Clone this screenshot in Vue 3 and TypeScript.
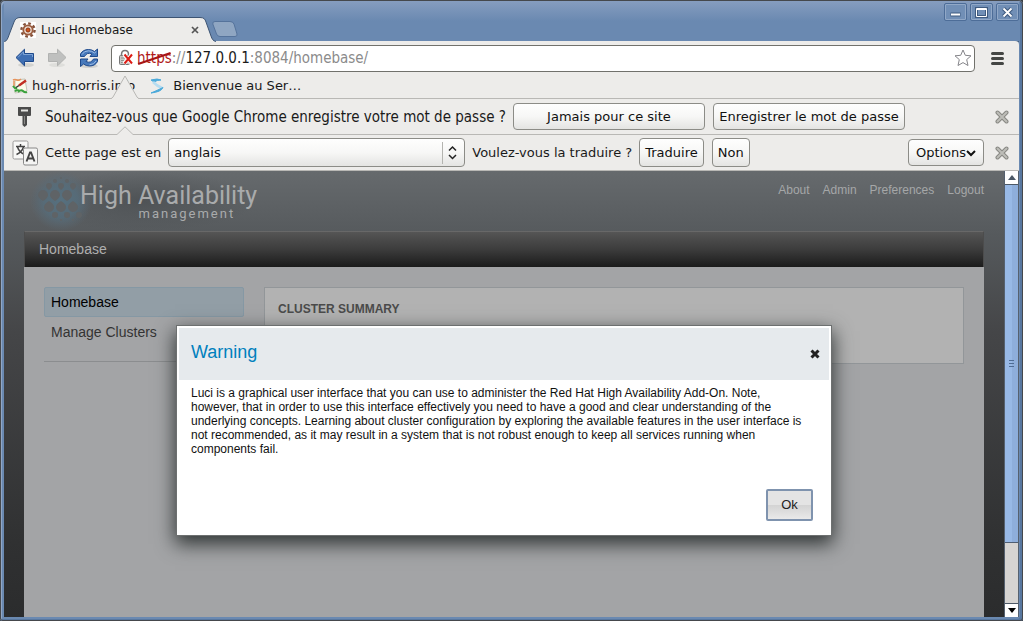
<script setup lang="ts">
import { computed, ref } from 'vue'

interface Bookmark { id: string; label: string }

const bookmarks: Bookmark[] = [
  { id: 'hugh', label: 'hugh-norris.info' },
  { id: 'sfr', label: 'Bienvenue au Ser…' },
]
const topLinks = ['About', 'Admin', 'Preferences', 'Logout']
const sections = ['Homebase', 'Manage Clusters']

const url = 'https://127.0.0.1:8084/homebase/'
const editing = ref(false)
const fieldValue = computed(() => (editing.value ? url : ''))
const language = ref('anglais')
const passwordBar = ref(true)
const translateBar = ref(true)
const warningOpen = ref(true)
</script>

<template>
  <div class="window">
    <header class="titlebar">
      <div class="tab">
        <svg class="tab-shape" viewBox="0 0 212 25" aria-hidden="true">
          <path d="M0 25 C3 24 4 21 5 18 L10 5 C11 2 13 .5 16 .5 H196 C200 .5 201 2 202 5 L207 19 C208 22 209 24 212 25Z" fill="#edecea" />
          <path d="M0 25 C3 24 4 21 5 18 L10 5 C11 2 13 .5 16 .5 H196 C200 .5 201 2 202 5 L207 19 C208 22 209 24 212 24.5" fill="none" stroke="#3d5473" />
        </svg>
        <svg class="favicon" viewBox="0 0 16 16" aria-hidden="true">
          <rect width="16" height="16" fill="#fff" />
          <circle cx="8" cy="8" r="6.6" fill="none" stroke="#84513a" stroke-width="2.4" stroke-dasharray="2.7 2.48" />
          <circle cx="8" cy="8" r="4.700" fill="#e9d8cd" stroke="#9a5c3e" stroke-width="1.800" />
          <circle cx="8" cy="8" r="2" fill="#d2521b" stroke="#8c3510" />
        </svg>
        <span class="tab-title">Luci Homebase</span>
        <button class="plain tab-close" aria-label="Fermer l'onglet">
          <svg width="8" height="8" viewBox="0 0 8 8"><path d="M1 1l6 6M7 1L1 7" stroke="#555" stroke-width="1.7" /></svg>
        </button>
      </div>
      <button class="plain new-tab" aria-label="Nouvel onglet">
        <svg width="26" height="16" viewBox="0 0 26 16"><path d="M3 .5H18Q21 .5 22 3L25 13Q25.500 15.500 23 15.500H8Q5.500 15.500 4.500 13L.8 3Q.3 .5 3 .5Z" fill="#8fa6c2" stroke="#55739b" /></svg>
      </button>
      <div class="controls">
        <button class="control" aria-label="Réduire">
          <svg width="21" height="15" viewBox="0 0 21 15"><path d="M5.500 9.500h10" stroke="#3f5b80" stroke-width="4" /><path d="M6 9.500h9" stroke="#fff" stroke-width="2" /></svg>
        </button>
        <button class="control" aria-label="Agrandir">
          <svg width="21" height="15" viewBox="0 0 21 15"><rect x="5.500" y="3.500" width="10" height="8" fill="none" stroke="#3f5b80" stroke-width="3" /><path d="M5.500 3.500h10v8h-10zM5.500 4.500h10" fill="none" stroke="#fff" /></svg>
        </button>
        <button class="control" aria-label="Fermer">
          <svg width="21" height="15" viewBox="0 0 21 15"><path d="M6.500 3.500l8 8M14.500 3.500l-8 8" stroke="#3f5b80" stroke-width="4" /><path d="M6.500 3.500l8 8M14.500 3.500l-8 8" stroke="#fff" stroke-width="1.800" /></svg>
        </button>
      </div>
    </header>

    <div class="browser">
      <nav class="toolbar" aria-label="Navigation">
        <button class="plain tool" aria-label="Précédent">
          <svg width="20" height="20" viewBox="0 0 20 20"><ellipse cx="11" cy="17" rx="8" ry="2" fill="#d3d3d0" /><path d="M1 9.500L9.500 1.200V5.500H18.500V13.500H9.500V17.800Z" fill="#3f6fb3" stroke="#1f4a8c" /><path d="M3 9.300L8.500 3.800V6.500H17.500V9" fill="none" stroke="#7ea4d6" /></svg>
        </button>
        <button class="plain tool" aria-label="Suivant">
          <svg width="20" height="20" viewBox="0 0 20 20"><ellipse cx="10" cy="17" rx="8" ry="2" fill="#dededb" /><path d="M19 9.500L10.500 1.200V5.500H1.500V13.500H10.500V17.800Z" fill="#bfc0bf" stroke="#b1b2b1" /></svg>
        </button>
        <button class="plain tool" aria-label="Actualiser">
          <svg width="20" height="20" viewBox="0 0 20 20">
            <ellipse cx="10" cy="18" rx="9" ry="2" fill="#d3d3d0" />
            <path d="M1.500 8.500V6Q4 1.500 9.500 1.500Q13 1.500 15.500 3.500L18.500 1V8.500H11L13 6Q8 3.800 5.500 8.500Z" fill="#4779bb" stroke="#1f4a8c" />
            <path d="M18.500 11V13.500Q16 18 10.500 18Q7 18 4.500 16L1.500 18.500V11H9L7 13.500Q12 15.700 14.500 11Z" fill="#4779bb" stroke="#1f4a8c" />
            <path d="M3 6.500Q5 2.800 9.500 2.800Q13 2.800 15.500 5L17.300 3.500M17 13Q15 16.700 10.500 16.700" fill="none" stroke="#9dbbe4" />
          </svg>
        </button>
        <div class="omnibox">
          <svg class="lock" width="16" height="18" viewBox="0 0 16 18" aria-hidden="true">
            <path d="M3.500 8V5.500Q3.500 1.500 7 1.500T10.500 5.500V8" fill="none" stroke="#777" stroke-width="1.500" />
            <rect x="1.500" y="6.500" width="10" height="9" rx="1" fill="#c9c9c6" stroke="#777" />
            <path d="M3 9h6M3 11.500h5M3 13.500h5" stroke="#929290" />
            <path d="M6 5.500l8 9M14 5.500l-8 9" stroke="#fff" stroke-width="4" />
            <path d="M6.500 5.500l7.500 9M14 5.500l-7.500 9" stroke="#dc1d16" stroke-width="2" />
          </svg>
          <div class="address">
            <input class="address-input" type="text" aria-label="Adresse" :value="fieldValue" @focus="editing = true" @blur="editing = false" />
            <div v-if="!editing" class="address-text">
              <span class="scheme">https<svg class="strike" viewBox="0 0 32 13" preserveAspectRatio="none" aria-hidden="true"><path d="M1 12L31 1" stroke="#a81414" stroke-width="2" /></svg></span><span>://</span><span class="host">127.0.0.1</span><span>:8084/homebase/</span>
            </div>
          </div>
          <button class="plain star" aria-label="Ajouter aux favoris">
            <svg width="18" height="18" viewBox="0 0 18 18"><path d="M9 1L11.300 6.300L17 6.800L12.700 10.600L14 16.500L9 13.600L4 16.500L5.300 10.600L1 6.800L6.700 6.300Z" fill="#fff" stroke="#85858a" stroke-linejoin="round" /></svg>
          </button>
        </div>
        <button class="plain menu" aria-label="Menu">
          <svg width="13" height="13" viewBox="0 0 13 13"><path d="M1.500 1.500h10M1.500 6.500h10M1.500 11.500h10" stroke="#444644" stroke-width="3" stroke-linecap="round" /></svg>
        </button>
      </nav>

      <nav class="bookmarks" aria-label="Favoris">
        <a v-for="mark in bookmarks" :key="mark.id" href="#" class="bookmark">
          <svg v-if="mark.id === 'hugh'" width="16" height="16" viewBox="0 0 16 16" aria-hidden="true">
            <path d="M3 2L13 1L15 13L3 15Z" fill="#fbfbe9" stroke="#c4c4b8" />
            <path d="M1 2q2-1 4 0t4-1M2 3v5" stroke="#e8935a" stroke-width="1.500" fill="none" />
            <path d="M7 7.500L14 2.500" stroke="#c22f22" stroke-width="2.500" />
            <path d="M1 8q2 3 4 2M6 14q3-3 5-1t4 1M3 13.500q1-2 4-1" stroke="#3aa13c" stroke-width="2" fill="none" />
            <path d="M4 9.500L7 7.500" stroke="#333" stroke-width="1.500" />
          </svg>
          <svg v-else width="16" height="16" viewBox="0 0 16 16" aria-hidden="true">
            <path d="M2 2Q9 0 12 2Q8 2 5 4Z" fill="#4aa9da" stroke="#4aa9da" />
            <path d="M4 4Q8 8 13 10" stroke="#b5dcf1" stroke-width="2.500" fill="none" />
            <path d="M14 9.500Q12 14 2 15Q8 12.500 14 9.500Z" fill="#4aa9da" stroke="#4aa9da" />
          </svg>
          <span>{{ mark.label }}</span>
        </a>
      </nav>

      <section v-if="passwordBar" class="infobar" aria-label="Mot de passe">
        <svg class="pointer pointer-tall" viewBox="0 0 28 24" aria-hidden="true"><path d="M0 24L1 23L14 .7L27 23L28 24Z" fill="#edecea" /><path d="M0 23.500Q1 23.500 2 22L14 1L26 22Q27 23.500 28 23.500" fill="none" stroke="#b9b8b5" /></svg>
        <svg class="info-icon" width="26" height="22" viewBox="0 0 26 22" aria-hidden="true">
          <path d="M6 1H19V9Q19 10 18 10H15V19L12.500 21L10.500 19V10H7Q6 10 6 9Z" fill="#4b4b4b" />
          <path d="M9 4.500H16" stroke="#e6e6e3" stroke-width="2" />
          <path d="M12.500 10V18" stroke="#8a8a88" />
        </svg>
        <span class="info-text message">Souhaitez-vous que Google Chrome enregistre votre mot de passe ?</span>
        <button class="push wide">Jamais pour ce site</button>
        <button class="push wide">Enregistrer le mot de passe</button>
        <button class="plain dismiss" aria-label="Fermer la barre" @click="passwordBar = false">
          <svg width="14" height="14" viewBox="0 0 14 14"><path d="M2.500 2.500l9 9M11.500 2.500l-9 9" stroke="#888883" stroke-width="4" stroke-linecap="round" /><path d="M2.500 2.500l9 9M11.500 2.500l-9 9" stroke="#bdbdb8" stroke-width="2" stroke-linecap="round" /></svg>
        </button>
      </section>

      <section v-if="translateBar" class="infobar" aria-label="Traduction">
        <svg class="pointer pointer-short" viewBox="0 0 18 9" aria-hidden="true"><path d="M0 9L1 8L9 .7L17 8L18 9Z" fill="#edecea" /><path d="M0 8.500H1L9 .8L17 8.500H18" fill="none" stroke="#b9b8b5" /></svg>
        <svg class="info-icon" width="26" height="26" viewBox="0 0 26 26" aria-hidden="true">
          <rect x="1" y="1" width="15" height="18" rx="1.500" fill="#f8f8f7" stroke="#999" />
          <path d="M8.500 4V6M4 6.500H13M5.500 7Q7 12 12.500 14.500M11.500 7Q10 12 4.500 14.500" fill="none" stroke="#444" stroke-width="1.500" />
          <rect x="11.500" y="8" width="14" height="17" rx="1.500" fill="#f4f4f3" stroke="#888" />
          <path d="M14.500 21.500L18 12.500H19L22.500 21.500M16 18.500H21" fill="none" stroke="#444" stroke-width="1.900" />
        </svg>
        <label class="info-text" for="language">Cette page est en</label>
        <div class="picker">
          <select id="language" v-model="language"><option>anglais</option><option>français</option></select>
          <svg class="picker-arrows" width="24" height="22" viewBox="0 0 24 22" aria-hidden="true"><path d="M1.500 0V22" stroke="#b4b4b0" /><path d="M8 8.500L11.500 5L15 8.500M8 13L11.500 16.500L15 13" fill="none" stroke="#222" stroke-width="1.500" /></svg>
        </div>
        <span class="info-text">Voulez-vous la traduire ?</span>
        <button class="push tall">Traduire</button>
        <button class="push tall">Non</button>
        <button class="push options">Options<svg width="10" height="8" viewBox="0 0 10 8" aria-hidden="true"><path d="M1 2l4 4 4-4" fill="none" stroke="#111" stroke-width="2" /></svg></button>
        <button class="plain dismiss" aria-label="Fermer la barre" @click="translateBar = false">
          <svg width="14" height="14" viewBox="0 0 14 14"><path d="M2.500 2.500l9 9M11.500 2.500l-9 9" stroke="#888883" stroke-width="4" stroke-linecap="round" /><path d="M2.500 2.500l9 9M11.500 2.500l-9 9" stroke="#bdbdb8" stroke-width="2" stroke-linecap="round" /></svg>
        </button>
      </section>

      <div class="viewport">
        <div class="page">
          <header class="page-header">
            <div class="logo">
              <svg width="62" height="60" viewBox="0 0 62 60" aria-hidden="true">
                <defs>
                  <radialGradient id="glow"><stop offset="0" stop-color="#56707f" /><stop offset=".55" stop-color="#566d7b" stop-opacity=".85" /><stop offset="1" stop-color="#5a6a76" stop-opacity="0" /></radialGradient>
                </defs>
                <ellipse cx="31" cy="30" rx="31" ry="30" fill="url(#glow)" />
                <g fill="#5f6366">
                  <circle cx="31" cy="7" r="1" /><circle cx="25" cy="10" r="2" /><circle cx="37" cy="10" r="2" />
                  <path d="M19 12a3 3 0 0 1 3 3q0 2-3 4q-3-2-3-4a3 3 0 0 1 3-3zM31 12a3 3 0 0 1 3 3q0 2-3 4q-3-2-3-4a3 3 0 0 1 3-3zM43 12a3 3 0 0 1 3 3q0 2-3 4q-3-2-3-4a3 3 0 0 1 3-3z" />
                  <path d="M13 19a5 5 0 0 1 5 5q0 3-5 6q-5-3-5-6a5 5 0 0 1 5-5zM25 19a5 5 0 0 1 5 5q0 3-5 6q-5-3-5-6a5 5 0 0 1 5-5zM37 19a5 5 0 0 1 5 5q0 3-5 6q-5-3-5-6a5 5 0 0 1 5-5z" />
                  <path d="M19 41a5 5 0 0 1-5-5q0-3 5-6q5 3 5 6a5 5 0 0 1-5 5zM31 41a5 5 0 0 1-5-5q0-3 5-6q5 3 5 6a5 5 0 0 1-5 5zM43 41a5 5 0 0 1-5-5q0-3 5-6q5 3 5 6a5 5 0 0 1-5 5z" />
                  <circle cx="25" cy="44" r="3" /><circle cx="37" cy="44" r="3" /><circle cx="49" cy="44" r="3" />
                  <circle cx="31" cy="49" r="1" /><circle cx="43" cy="49" r="1" />
                </g>
              </svg>
              <div class="brand">
                <span class="brand-name">High Availability</span>
                <span class="brand-sub">management</span>
              </div>
            </div>
            <nav class="top-links" aria-label="Compte">
              <a v-for="link in topLinks" :key="link" href="#">{{ link }}</a>
            </nav>
          </header>
          <div class="crumbs"><a href="#">Homebase</a></div>
          <main class="content">
            <nav class="sidebar" aria-label="Sections">
              <a v-for="(name, i) in sections" :key="name" href="#" :class="{ active: i === 0 }">{{ name }}</a>
            </nav>
            <section class="card"><h2>CLUSTER SUMMARY</h2></section>
          </main>

          <div v-if="warningOpen" class="overlay">
            <div class="dialog" role="dialog" aria-modal="true" aria-labelledby="warning-title">
              <div class="dialog-head">
                <h1 id="warning-title">Warning</h1>
                <button class="plain dialog-close" aria-label="Close" @click="warningOpen = false">
                  <svg width="10" height="10" viewBox="0 0 10 10"><path d="M1.500 1.500l7 7M8.500 1.500l-7 7" stroke="#222" stroke-width="3" /></svg>
                </button>
              </div>
              <p>Luci is a graphical user interface that you can use to administer the Red Hat High Availability Add-On. Note, however, that in order to use this interface effectively you need to have a good and clear understanding of the underlying concepts. Learning about cluster configuration by exploring the available features in the user interface is not recommended, as it may result in a system that is not robust enough to keep all services running when components fail.</p>
              <div class="dialog-foot"><button class="ok" @click="warningOpen = false">Ok</button></div>
            </div>
          </div>
        </div>

        <div class="scrollbar">
          <button class="plain scroll-step" aria-label="Défiler vers le haut"><svg width="8" height="5" viewBox="0 0 8 5"><path d="M0 5L4 0L8 5Z" fill="#4c5866" /></svg></button>
          <div class="thumb"><span class="grip"></span></div>
          <div class="track"></div>
          <button class="plain scroll-step bottom" aria-label="Défiler vers le bas"><svg width="8" height="5" viewBox="0 0 8 5"><path d="M0 0L4 5L8 0Z" fill="#000" /></svg></button>
        </div>
      </div>
    </div>
  </div>
</template>

<style>
body {
  margin: 0;
  background: #3c3f43;
}
</style>

<style scoped>
* {
  box-sizing: border-box;
}
.window {
  min-height: 100vh;
  display: flex;
  flex-direction: column;
  padding: 0 4px 4px;
  background: #6a89b1;
  border-radius: 5px 5px 3px 3px;
  box-shadow: inset 0 0 0 1px #45484c, inset 2px 2px 0 #91a7c6, inset -3px -2px 0 #58779f;
  font-family: "DejaVu Sans", sans-serif;
  font-size: 13px;
  line-height: 18px;
  color: #1a1a1a;
}
.plain {
  display: flex;
  align-items: center;
  justify-content: center;
  padding: 0;
  border: 0;
  background: none;
  flex: none;
}
a {
  color: inherit;
  text-decoration: none;
}
.titlebar {
  height: 41px;
  margin-top: 1px;
  margin-bottom: -1px;
  display: flex;
  align-items: flex-end;
  background: linear-gradient(#869dbf, #6a89b1 20px);
  border-bottom: 1px solid #46607f;
}
.tab {
  position: relative;
  width: 212px;
  height: 25px;
  margin-bottom: -1px;
  padding: 0 12px 0 16px;
  display: flex;
  align-items: center;
  gap: 5px;
}
.tab-shape {
  position: absolute;
  inset: 0;
  width: 100%;
  height: 100%;
}
.favicon {
  position: relative;
  width: 16px;
  height: 16px;
  flex: none;
}
.tab-title {
  position: relative;
  flex: 1;
  font-size: 12px;
}
.tab-close {
  position: relative;
  width: 18px;
  height: 18px;
}
.new-tab {
  align-self: flex-end;
  margin: 0 0 4px -4px;
}
.controls {
  align-self: flex-start;
  display: flex;
  gap: 3px;
  margin: 2px 0 0 auto;
}
.control {
  width: 23px;
  height: 18px;
  padding: 0;
  display: flex;
  align-items: center;
  justify-content: center;
  border: 1px solid #4d6d98;
  border-radius: 2px;
  background: #718fb6;
  box-shadow: inset 0 0 0 1px #91a8c7;
}
.browser {
  flex: 1;
  display: flex;
  flex-direction: column;
  background: #edecea;
  border-radius: 0 4px 0 0;
}
.toolbar {
  display: flex;
  align-items: center;
  gap: 12px;
  height: 34px;
  padding: 0 15px 0 11px;
}
.tool {
  width: 20px;
  height: 20px;
}
.omnibox {
  flex: 1;
  height: 27px;
  margin-right: 4px;
  padding: 0 2px 0 6px;
  display: flex;
  align-items: center;
  gap: 3px;
  background: #fff;
  border: 1px solid #71716c;
  border-radius: 4px;
}
.lock {
  flex: none;
}
.address {
  position: relative;
  flex: 1;
  height: 20px;
}
.address-input {
  width: 100%;
  height: 100%;
  padding: 0;
  border: 0;
  outline: 0;
  background: none;
  font: inherit;
}
.address,
.message {
  font-family: "DejaVu Sans Condensed", "DejaVu Sans", sans-serif;
  font-size: 15px;
}
.address-text {
  position: absolute;
  inset: 0;
  display: flex;
  line-height: 20px;
  color: #8b8b8b;
  pointer-events: none;
}
.scheme {
  position: relative;
  color: #b01a1a;
}
.strike {
  position: absolute;
  left: 0;
  top: 4px;
  width: 100%;
  height: 13px;
}
.host {
  color: #1a1a1a;
}
.bookmarks {
  height: 24px;
  display: flex;
  align-items: center;
  gap: 14px;
  padding: 0 8px 2px;
  border-bottom: 1px solid #b9b8b5;
}
.bookmark {
  display: flex;
  align-items: center;
  gap: 4px;
}
.bookmark + .bookmark {
  gap: 8px;
}
.infobar {
  position: relative;
  height: 36px;
  padding: 0 8px;
  display: flex;
  align-items: center;
  gap: 7px;
  border-bottom: 1px solid #b9b8b5;
}
.pointer {
  position: absolute;
}
.pointer-tall {
  left: 107px;
  top: -24px;
  width: 28px;
  height: 24px;
}
.pointer-short {
  left: 112px;
  top: -9px;
  width: 18px;
  height: 9px;
}
.info-icon {
  flex: none;
}
.info-text {
  white-space: nowrap;
}
.push {
  height: 27px;
  padding: 0 4px;
  border: 1px solid #8c8c87;
  border-radius: 4px;
  background: linear-gradient(#fefefe, #f7f7f6 50%, #e4e4e2);
  font: inherit;
  color: #111;
  white-space: nowrap;
}
.push + .push {
  margin-left: 1px;
}
.wide {
  width: 192px;
}
.tall,
.picker {
  height: 29px;
}
.tall {
  padding: 0 5px;
}
.infobar .options {
  display: flex;
  align-items: center;
  justify-content: center;
  width: 76px;
  margin-left: auto;
}
.dismiss {
  width: 18px;
  height: 18px;
  margin-left: auto;
}
.options + .dismiss {
  margin-left: 2px;
}
.picker {
  position: relative;
  width: 297px;
}
.picker select {
  width: 100%;
  height: 100%;
  padding: 0 24px 0 5px;
  appearance: none;
  border: 1px solid #8c8c87;
  border-radius: 4px;
  background: linear-gradient(#fefefe, #f7f7f6 50%, #e4e4e2);
  font: inherit;
  color: #111;
}
.picker-arrows {
  position: absolute;
  right: 0;
  top: 4px;
  pointer-events: none;
}
.viewport {
  flex: 1;
  display: flex;
  min-height: 0;
}
.page {
  position: relative;
  flex: 1;
  display: flex;
  flex-direction: column;
  padding: 0 20px;
  background: linear-gradient(#666a6d, #565a5d 14%, #454648 36%, #303132 83%, #2b2c2d);
  font-family: "Liberation Sans", Arial, sans-serif;
  font-size: 14px;
}
.page-header {
  height: 60px;
  display: flex;
  justify-content: space-between;
}
.logo {
  display: flex;
  margin-left: 6px;
  background: radial-gradient(closest-side, #4f5356, transparent);
}
.brand {
  display: flex;
  flex-direction: column;
  align-items: flex-end;
  margin-left: -12px;
  padding-top: 12px;
  font-family: Roboto, sans-serif;
  color: #a9abac;
}
.brand-name {
  font-size: 25px;
  line-height: 25px;
}
.brand-sub {
  padding-right: 22px;
  font-size: 13px;
  line-height: 12px;
  letter-spacing: 2px;
}
.top-links {
  display: flex;
  gap: 13px;
  padding-top: 10px;
  font-size: 12px;
  color: #a5a7a8;
}
.crumbs {
  height: 36px;
  padding: 0 14px;
  border: 1px solid #4c4c4c;
  border-top-color: #686868;
  border-bottom: 0;
  background: linear-gradient(#555, #3c3c3c 50%, #1b1b1b);
  line-height: 35px;
  color: #afafaf;
}
.content {
  flex: 1;
  display: flex;
  align-items: flex-start;
  gap: 20px;
  padding: 20px;
  background: #a3a4a6;
}
.sidebar {
  width: 200px;
  flex: none;
  display: flex;
  flex-direction: column;
  padding-bottom: 14px;
  border-bottom: 1px solid #8b8d8f;
}
.sidebar a {
  height: 30px;
  padding: 0 6px;
  border: 1px solid transparent;
  border-radius: 2px;
  line-height: 28px;
  color: #333;
}
.sidebar .active {
  background: #929ea6;
  border-color: #8598a4;
  color: #000;
}
.card {
  flex: 1;
  min-height: 77px;
  padding: 12px 13px;
  background: #b2b2b2;
  border: 1px solid #929699;
}
.card h2 {
  margin: 0;
  font-size: 12px;
  line-height: 18px;
  color: #4b4b4b;
}
.overlay {
  position: absolute;
  inset: 0;
  display: flex;
  align-items: flex-start;
  justify-content: center;
  padding-top: 154px;
}
.dialog {
  width: 656px;
  max-width: 90%;
  padding: 2px;
  background: #fff;
  border: 1px solid #6d7070;
  box-shadow: 0 7px 18px 1px #303535;
}
.dialog-head {
  height: 52px;
  padding: 0 6px 0 12px;
  display: flex;
  align-items: center;
  justify-content: space-between;
  background: #e6eaed;
}
.dialog-head h1 {
  margin: 0;
  padding-bottom: 4px;
  font-size: 18px;
  font-weight: 400;
  line-height: 24px;
  color: #0080bd;
}
.dialog-close {
  width: 16px;
  height: 16px;
}
.dialog p {
  margin: 0;
  padding: 6px 23px 0 12px;
  font-size: 12px;
  line-height: 14px;
  color: #111;
}
.dialog-foot {
  display: flex;
  justify-content: flex-end;
  padding: 33px 16px 12px;
}
.ok {
  width: 47px;
  height: 32px;
  padding: 0;
  border: 2px solid #7f93ae;
  border-radius: 2px;
  background: linear-gradient(#e4e4e4 50%, #d3d3d3 50%, #e9e9e9);
  font: 13px/18px "Liberation Sans", Arial, sans-serif;
  color: #222;
}
.scrollbar {
  width: 15px;
  display: flex;
  flex-direction: column;
  border-left: 1px solid #56616f;
  border-right: 1px solid #56616f;
  background: #d6d4d2;
}
.scroll-step {
  height: 14px;
  background: #fff;
  border-bottom: 1px solid #4c5866;
}
.scroll-step.bottom {
  border-top: 1px solid #4c5866;
  border-bottom: 0;
}
.thumb {
  flex: 6;
  display: flex;
  align-items: center;
  justify-content: center;
  border-bottom: 1px solid #4f5e73;
  background: linear-gradient(90deg, #98b9e6 50%, #8eaedb 50%);
}
.grip {
  width: 5px;
  height: 7px;
  border: solid #4f6c94;
  border-width: 1px 0;
  background: linear-gradient(transparent 2px, #4f6c94 2px, #4f6c94 3px, transparent 3px);
}
.track {
  flex: 1;
}
</style>
